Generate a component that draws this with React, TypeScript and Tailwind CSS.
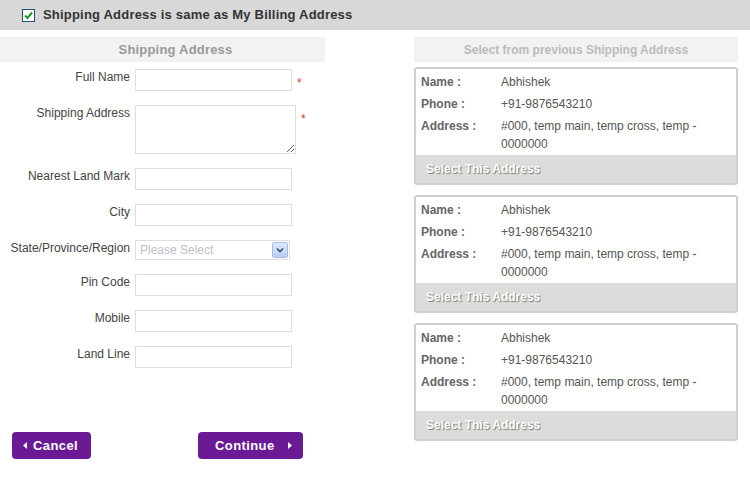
import React from "react";

const rows = [
  { label: "Full Name", kind: "input", req: true },
  { label: "Shipping Address", kind: "textarea", req: true },
  { label: "Nearest Land Mark", kind: "input" },
  { label: "City", kind: "input" },
  { label: "State/Province/Region", kind: "select" },
  { label: "Pin Code", kind: "input" },
  { label: "Mobile", kind: "input" },
  { label: "Land Line", kind: "input" },
];

function Card() {
  return (
    <div className="border-2 border-[#cfcfcf] rounded-[3px] bg-white overflow-hidden">
      <div className="pt-[4px] pb-[2px] pl-[5px] flex flex-col gap-[4px] text-[12px] leading-[18px]">
        <div className="flex">
          <div className="w-[80px] font-bold text-[#666]">Name :</div>
          <div className="text-[#555]">Abhishek</div>
        </div>
        <div className="flex">
          <div className="w-[80px] font-bold text-[#666]">Phone :</div>
          <div className="text-[#555]">+91-9876543210</div>
        </div>
        <div className="flex">
          <div className="w-[80px] shrink-0 font-bold text-[#666]">Address :</div>
          <div className="text-[#555] w-[210px]">#000, temp main, temp cross, temp - 0000000</div>
        </div>
      </div>
      <div className="h-[28px] bg-[#dcdcda] flex items-center pl-[10px] text-[12px] font-bold text-white [text-shadow:1px_1px_1px_rgba(0,0,0,0.45)]">
        Select This Address
      </div>
    </div>
  );
}

export default function App() {
  return (
    <div className="w-[750px] h-[477px] bg-white font-['Liberation_Sans',Arial,sans-serif] overflow-hidden">
      <div className="h-[30px] bg-[#d8d8d8] flex items-center pl-[22px] gap-[8px]">
        <div className="w-[13px] h-[13px] border border-[#1f4f7a] bg-white flex items-center justify-center">
          <svg width="9" height="9" viewBox="0 0 9 9">
            <path d="M1 4.5 L3.5 7 L8 1.5" stroke="#1a9a2a" strokeWidth="2" fill="none" />
          </svg>
        </div>
        <span className="text-[13px] font-bold text-[#333] tracking-[0.2px]">
          Shipping Address is same as My Billing Address
        </span>
      </div>
      <div className="flex pt-[7px]">
        <div className="w-[325px]">
          <div className="h-[25px] bg-[#f2f2f2] flex items-center justify-center pl-[26px] text-[13px] font-bold text-[#999] tracking-[0.2px]">
            Shipping Address
          </div>
          <div className="mt-[7px] flex flex-col gap-[14px]">
            {rows.map((r) => (
              <div key={r.label} className="flex items-start">
                <div className="w-[130px] text-right text-[12px] leading-[14px] text-[#444] pt-[1px]">
                  {r.label}
                </div>
                <div className="ml-[5px] flex items-start">
                  {r.kind === "input" && (
                    <div className="w-[157px] h-[22px] border border-[#dedede] bg-white" />
                  )}
                  {r.kind === "textarea" && (
                    <textarea className="w-[161px] h-[49px] border border-[#dedede] bg-white block outline-none" />
                  )}
                  {r.kind === "select" && (
                    <div className="w-[155px] h-[20px] border border-[#dedede] bg-white flex items-center justify-between pl-[4px] pr-[1px]">
                      <span className="text-[12px] text-[#c0c0c8]">Please Select</span>
                      <div className="w-[16px] h-[16px] rounded-[2px] border border-[#a9bde8] bg-gradient-to-b from-[#dfe8fb] to-[#b9cdf5] flex items-center justify-center">
                        <svg width="8" height="6" viewBox="0 0 8 6">
                          <path d="M1 1.5 L4 4.5 L7 1.5" stroke="#3a4a6a" strokeWidth="1.6" fill="none" />
                        </svg>
                      </div>
                    </div>
                  )}
                  {r.req && (
                    <span className="ml-[5px] text-[#e33] text-[12px] leading-[12px] pt-[8px]">*</span>
                  )}
                </div>
              </div>
            ))}
          </div>
          <div className="mt-[64px] flex items-start">
            <div className="ml-[12px] w-[79px] h-[27px] rounded-[4px] bg-[#6b1a96] flex items-center pl-[11px] gap-[6px] text-white text-[13px] font-bold tracking-[0.4px]">
              <svg width="4" height="7" viewBox="0 0 4 7"><path d="M4 0 L0 3.5 L4 7 Z" fill="white" /></svg>
              Cancel
            </div>
            <div className="ml-[107px] w-[105px] h-[27px] rounded-[4px] bg-[#6b1a96] flex items-center pl-[17px] text-white text-[13px] font-bold tracking-[0.4px]">
              Continue
              <svg className="ml-[13px]" width="4" height="7" viewBox="0 0 4 7"><path d="M0 0 L4 3.5 L0 7 Z" fill="white" /></svg>
            </div>
          </div>
        </div>
        <div className="ml-[89px] w-[324px]">
          <div className="h-[25px] bg-[#f2f2f2] flex items-center justify-center text-[12px] font-bold text-[#bbb]">
            Select from previous Shipping Address
          </div>
          <div className="mt-[5px] flex flex-col gap-[10px]">
            <Card />
            <Card />
            <Card />
          </div>
        </div>
      </div>
    </div>
  );
}
